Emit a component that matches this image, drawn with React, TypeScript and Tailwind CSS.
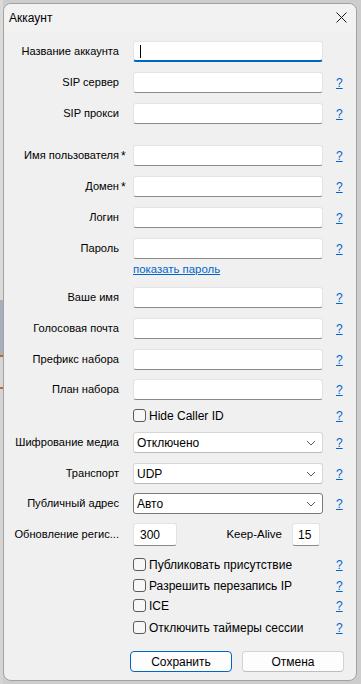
import React from "react";

const font = { fontFamily: '"Liberation Sans", Arial, sans-serif' };

function Help() {
  return (
    <span className="ml-[13px] text-[12px] leading-none text-[#0066cc] underline">?</span>
  );
}

function TextInput({ focused = false, w = "w-[190px]" }: { focused?: boolean; w?: string }) {
  return (
    <div
      className={
        (focused
          ? "border border-[#e5e5e5] border-b-2 border-b-[#0067c0] "
          : "border border-[#e3e3e3] border-b-[#8a8a8a] ") +
        w +
        " h-full shrink-0 rounded-[3px] bg-white flex items-center"
      }
    >
      {focused && <div className="ml-[6px] w-px h-[13px] bg-black" />}
    </div>
  );
}

function Row({
  label,
  star = false,
  help = true,
  className = "",
  children,
}: {
  label: string;
  star?: boolean;
  help?: boolean;
  className?: string;
  children: React.ReactNode;
}) {
  return (
    <div className={"flex items-center h-[21px] shrink-0 " + className}>
      <div className="w-[115px] shrink-0 text-right text-[11.1px] leading-none text-black whitespace-nowrap">
        {label}
      </div>
      <div className="w-[14px] shrink-0 pl-[2px] text-[12px] leading-none text-black">
        {star ? "*" : ""}
      </div>
      {children}
      {help && <Help />}
    </div>
  );
}

function Select({ value, dark = false }: { value: string; dark?: boolean }) {
  return (
    <div
      className={
        (dark ? "border-[#7a7a7a] " : "border-[#d6d6d6] border-b-[#b9b9b9] ") +
        "w-[190px] h-full shrink-0 rounded-[3px] border bg-white flex items-center justify-between pl-[3px] pr-[6px]"
      }
    >
      <span className="text-[12px] leading-none text-black">{value}</span>
      <svg width="10" height="6" viewBox="0 0 10 6">
        <polyline points="1,1 5,5 9,1" fill="none" stroke="#5a5a5a" strokeWidth="1" />
      </svg>
    </div>
  );
}

function CheckRow({ label, className = "" }: { label: string; className?: string }) {
  return (
    <div className={"flex items-center h-[13px] shrink-0 " + className}>
      <div className="w-[129px] shrink-0" />
      <div className="w-[190px] shrink-0 flex items-center">
        <div className="w-[13px] h-[13px] shrink-0 rounded-[3px] border border-[#5c5c5c] bg-[#f7f7f7]" />
        <span className="ml-[3px] text-[12px] leading-none text-black whitespace-nowrap">{label}</span>
      </div>
      <Help />
    </div>
  );
}

export default function App() {
  return (
    <div className="w-[361px] h-[684px] bg-[#cdcdcd] flex overflow-hidden" style={font}>
      <div className="w-[3px] shrink-0 flex flex-col">
        <div className="h-[300px] bg-[#dadada]" />
        <div className="h-[55px] bg-[#a9aebd]" />
        <div className="h-[2px] bg-[#c8662a]" />
        <div className="h-[30px] bg-[#d6d6d6]" />
        <div className="h-[2px] bg-[#c8662a]" />
        <div className="flex-1 bg-[#d4d4d4]" />
      </div>
      <div className="mt-[3px] w-[354px] h-[678px] shrink-0 rounded-[8px] border border-[#a2a2a2] bg-[#f0f0f0] flex flex-col overflow-hidden">
        <div className="h-[27px] shrink-0 bg-[#f3f2f2] flex items-center justify-between pl-[5px] pr-[9px]">
          <span className="text-[12px] leading-none text-black">Аккаунт</span>
          <svg width="11" height="11" viewBox="0 0 11 11">
            <path d="M0.5 0.5 L10.5 10.5 M10.5 0.5 L0.5 10.5" stroke="#1a1a1a" strokeWidth="1" />
          </svg>
        </div>
        <div className="flex flex-col pt-[10px]">
          <Row label="Название аккаунта" help={false}>
            <TextInput focused />
          </Row>
          <Row label="SIP сервер" className="mt-[10px]">
            <TextInput />
          </Row>
          <Row label="SIP прокси" className="mt-[10px]">
            <TextInput />
          </Row>
          <Row label="Имя пользователя" star className="mt-[21px]">
            <TextInput />
          </Row>
          <Row label="Домен" star className="mt-[10px]">
            <TextInput />
          </Row>
          <Row label="Логин" className="mt-[10px]">
            <TextInput />
          </Row>
          <Row label="Пароль" className="mt-[10px]">
            <TextInput />
          </Row>
          <div className="mt-[4px] h-[14px] flex items-center shrink-0">
            <div className="w-[129px] shrink-0" />
            <span className="text-[11.4px] leading-none text-[#0066cc] underline">показать пароль</span>
          </div>
          <Row label="Ваше имя" className="mt-[10px]">
            <TextInput />
          </Row>
          <Row label="Голосовая почта" className="mt-[10px]">
            <TextInput />
          </Row>
          <Row label="Префикс набора" className="mt-[10px]">
            <TextInput />
          </Row>
          <Row label="План набора" className="mt-[9px]">
            <TextInput />
          </Row>
          <CheckRow label="Hide Caller ID" className="mt-[9px]" />
          <Row label="Шифрование медиа" className="mt-[10px]">
            <Select value="Отключено" />
          </Row>
          <Row label="Транспорт" className="mt-[10px]">
            <Select value="UDP" />
          </Row>
          <Row label="Публичный адрес" className="mt-[9px]">
            <Select value="Авто" dark />
          </Row>
          <div className="mt-[9px] h-[23px] flex items-center shrink-0">
            <div className="w-[115px] shrink-0 text-right text-[11.1px] leading-none text-black whitespace-nowrap">
              Обновление регис...
            </div>
            <div className="w-[14px] shrink-0" />
            <div className="w-[44px] h-full shrink-0 rounded-[3px] border border-[#e3e3e3] border-b-[#8a8a8a] bg-white flex items-center pl-[6px] text-[12px] leading-none text-black">
              300
            </div>
            <div className="w-[105px] shrink-0 text-right text-[11.5px] leading-none text-black">Keep-Alive</div>
            <div className="ml-[10px] w-[28px] h-full shrink-0 rounded-[3px] border border-[#e3e3e3] border-b-[#8a8a8a] bg-white flex items-center pl-[5px] text-[12px] leading-none text-black">
              15
            </div>
          </div>
          <CheckRow label="Публиковать присутствие" className="mt-[12px]" />
          <CheckRow label="Разрешить перезапись IP" className="mt-[8px]" />
          <CheckRow label="ICE" className="mt-[7px]" />
          <CheckRow label="Отключить таймеры сессии" className="mt-[9px]" />
          <div className="mt-[17px] h-[21px] flex shrink-0">
            <div className="w-[126px] shrink-0" />
            <div className="w-[102px] h-full rounded-[4px] border border-[#0067c0] bg-[#fdfdfd] flex items-center justify-center text-[12px] leading-none text-black">
              Сохранить
            </div>
            <div className="ml-[10px] w-[102px] h-full rounded-[4px] border border-[#d3d3d3] border-b-[#bdbdbd] bg-[#fdfdfd] flex items-center justify-center text-[12px] leading-none text-black">
              Отмена
            </div>
          </div>
        </div>
      </div>
    </div>
  );
}
